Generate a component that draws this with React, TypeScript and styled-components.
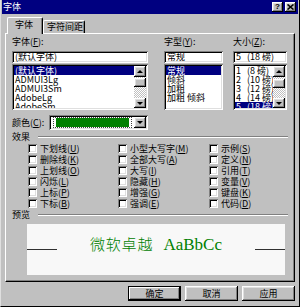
import React from 'react';
import styled, { createGlobalStyle } from 'styled-components';

const GlobalStyle = createGlobalStyle`
  html, body {
    margin: 0;
    padding: 0;
    background: #c0c0c0;
  }
  body {
    font-family: "Noto Sans CJK SC", "Noto Sans", sans-serif;
    font-size: 9px;
    color: #000;
  }
`;

const raised = `
  box-shadow: inset -1px -1px #000, inset 1px 1px #fff, inset -2px -2px #808080, inset 2px 2px #dfdfdf;
`;
const sunken = `
  box-shadow: inset 1px 1px #808080, inset -1px -1px #fff, inset 2px 2px #000, inset -2px -2px #dfdfdf;
`;

const Window = styled.div`
  width: 300px;
  height: 307px;
  box-sizing: border-box;
  background: #c0c0c0;
  border-left: 1px solid #dfdfdf;
  border-right: 1px solid #000;
  border-bottom: 1px solid #000;
  padding: 0 1px 1px 1px;
  display: flex;
  flex-direction: column;
  overflow: hidden;
`;

const TitleBar = styled.div`
  height: 14px;
  background: #000080;
  color: #fff;
  display: flex;
  align-items: center;
  padding: 0 1px 0 1px;
  flex-shrink: 0;
`;

const Title = styled.div`
  flex: 1;
  line-height: 14px;
  font-size: 9px;
`;

const TitleButton = styled.div`
  width: 11px;
  height: 10px;
  background: #c0c0c0;
  ${raised}
  display: flex;
  align-items: center;
  justify-content: center;
  color: #000;
  font-weight: bold;
  font-size: 8px;
  line-height: 10px;
  margin-left: 2px;
  font-family: "Liberation Sans", sans-serif;
`;

const Body = styled.div`
  padding: 3px 3px 0 3px;
  display: flex;
  flex-direction: column;
`;

const TabStrip = styled.div`
  height: 16px;
  display: flex;
  align-items: flex-end;
  padding-left: 2px;
`;

const Tab = styled.div<{ $active?: boolean }>`
  position: relative;
  z-index: ${(p) => (p.$active ? 2 : 1)};
  height: ${(p) => (p.$active ? '17px' : '13px')};
  margin-bottom: ${(p) => (p.$active ? '-1px' : '0')};
  box-sizing: border-box;
  width: ${(p) => (p.$active ? '36px' : '42px')};
  background: #c0c0c0;
  border-top: 1px solid #fff;
  border-left: 1px solid #fff;
  border-right: 1px solid #000;
  border-radius: 2px 2px 0 0;
  box-shadow: inset -1px 0 #808080;
  padding-left: ${(p) => (p.$active ? '7px' : '3px')};
  line-height: ${(p) => (p.$active ? '13px' : '12px')};
`;

const Panel = styled.div`
  height: 249px;
  box-sizing: border-box;
  border-top: 1px solid #fff;
  border-left: 1px solid #fff;
  border-right: 1px solid #000;
  border-bottom: 1px solid #000;
  box-shadow: inset -1px -1px #808080;
  padding: 3px 4px 0 6px;
  display: flex;
  flex-direction: column;
`;

const TopSection = styled.div`
  display: flex;
`;

const Column = styled.div<{ $w: number; $gap?: number }>`
  width: ${(p) => p.$w}px;
  margin-right: ${(p) => p.$gap ?? 0}px;
  display: flex;
  flex-direction: column;
`;

const Label = styled.div`
  height: 10px;
  line-height: 10px;
  margin-bottom: 4px;
  white-space: nowrap;
`;

const Field = styled.div`
  height: 12px;
  line-height: 12px;
  background: #fff;
  ${sunken}
  padding-left: 3px;
  white-space: nowrap;
  overflow: hidden;
`;

const ListBox = styled.div`
  height: 46px;
  box-sizing: border-box;
  margin-top: 1px;
  background: #fff;
  ${sunken}
  padding: 2px;
  display: flex;
`;

const Items = styled.div`
  flex: 1;
  overflow: hidden;
`;

const Item = styled.div<{ $sel?: boolean }>`
  height: 9px;
  line-height: 9px;
  padding-left: 1px;
  white-space: nowrap;
  background: ${(p) => (p.$sel ? '#000080' : 'transparent')};
  color: ${(p) => (p.$sel ? '#fff' : '#000')};
`;

const ScrollBar = styled.div`
  width: 12px;
  display: flex;
  flex-direction: column;
  background: repeating-conic-gradient(#c0c0c0 0 25%, #fff 0 50%) 0 0 / 2px 2px;
`;

const ScrollButton = styled.div<{ $h: number }>`
  height: ${(p) => p.$h}px;
  flex-shrink: 0;
  background: #c0c0c0;
  ${raised}
  display: flex;
  align-items: center;
  justify-content: center;
`;

const Track = styled.div<{ $h?: number }>`
  height: ${(p) => (p.$h ? `${p.$h}px` : 'auto')};
  flex: ${(p) => (p.$h ? '0 0 auto' : '1')};
`;

const Arrow = styled.div<{ $up?: boolean }>`
  width: 0;
  height: 0;
  border-left: 3px solid transparent;
  border-right: 3px solid transparent;
  ${(p) => (p.$up ? 'border-bottom: 3px solid #000;' : 'border-top: 3px solid #000;')}
`;

const ColorRow = styled.div`
  margin-top: 5px;
  height: 15px;
  display: flex;
  align-items: center;
`;

const ColorLabel = styled.div`
  width: 37px;
  white-space: nowrap;
`;

const Combo = styled.div`
  width: 99px;
  height: 15px;
  box-sizing: border-box;
  background: #fff;
  ${sunken}
  padding: 2px;
  display: flex;
`;

const ComboValue = styled.div`
  flex: 1;
  margin: 0 2px;
  border: 1px dotted #404040;
  padding: 0 2px;
  display: flex;
`;

const Swatch = styled.div<{ $c: string }>`
  flex: 1;
  background: ${(p) => p.$c};
`;

const DropButton = styled(ScrollButton)`
  width: 12px;
`;

const GroupHeader = styled.div<{ $mt: number }>`
  margin-top: ${(p) => p.$mt}px;
  height: 10px;
  line-height: 10px;
  display: flex;
  align-items: center;
`;

const GroupLine = styled.div`
  flex: 1;
  margin: 0 2px 0 8px;
  border-top: 1px solid #808080;
  border-bottom: 1px solid #fff;
`;

const CheckGrid = styled.div`
  margin-top: 1px;
  padding-left: 16px;
  display: grid;
  grid-template-columns: 90px 91px 1fr;
  grid-template-rows: repeat(6, 11px);
  grid-auto-flow: column;
`;

const CheckItem = styled.div`
  display: flex;
  align-items: center;
  gap: 3px;
  white-space: nowrap;
  line-height: 11px;
`;

const CheckBox = styled.div`
  width: 9px;
  height: 9px;
  box-sizing: border-box;
  background: #fff;
  ${sunken}
  flex-shrink: 0;
`;

const PreviewBox = styled.div`
  margin: 4px 5px 0 15px;
  height: 51px;
  background: #f8f8f8;
  box-sizing: border-box;
  padding-top: 10px;
`;

const PreviewRow = styled.div`
  display: flex;
  align-items: baseline;
`;

const PreviewLine = styled.div`
  width: 30px;
  height: 1px;
  background: #303030;
`;

const PreviewText = styled.div`
  flex: 1;
  text-align: center;
  color: #008000;
  font-family: "Liberation Serif", "Noto Sans CJK SC", serif;
  font-size: 17px;
  line-height: 20px;
  white-space: nowrap;
`;

const CjkPart = styled.span`
  font-family: "Noto Sans CJK SC", sans-serif;
  font-size: 15px;
  font-weight: 300;
  letter-spacing: 0.8px;
  margin-right: 6px;
`;

const ButtonRow = styled.div`
  margin-top: 4px;
  display: flex;
  justify-content: flex-end;
  gap: 4px;
`;

const Button = styled.div<{ $default?: boolean }>`
  width: 53px;
  height: 15px;
  box-sizing: border-box;
  background: #c0c0c0;
  ${raised}
  ${(p) => (p.$default ? 'outline: 1px solid #000; outline-offset: -1px; box-shadow: inset -2px -2px #000, inset 2px 2px #fff, inset -3px -3px #808080;' : '')}
  text-align: center;
  line-height: 15px;
`;

const fonts = ['(默认字体)', 'ADMUI3Lg', 'ADMUI3Sm', 'AdobeLg', 'AdobeSm'];
const styles = ['常规', '倾斜', '加粗', '加粗 倾斜'];
const sizes = ['1\u00a0\u00a0\u00a0(8 磅)', '2\u00a0\u00a0\u00a0(10 磅)', '3\u00a0\u00a0\u00a0(12 磅)', '4\u00a0\u00a0\u00a0(14 磅)', '5\u00a0\u00a0\u00a0(18 磅)'];

const effects: [string, string][] = [
  ['下划线', 'U'], ['删除线', 'K'], ['上划线', 'O'], ['闪烁', 'L'], ['上标', 'P'], ['下标', 'B'],
  ['小型大写字', 'M'], ['全部大写', 'A'], ['大写', 'I'], ['隐藏', 'H'], ['增强', 'G'], ['强调', 'E'],
  ['示例', 'S'], ['定义', 'N'], ['引用', 'T'], ['变量', 'V'], ['键盘', 'K'], ['代码', 'D'],
];

const Mn = ({ text, k }: { text: string; k: string }) => (
  <>
    {text}(<u>{k}</u>)
  </>
);

const Scroll = ({ top }: { top: number }) => (
  <ScrollBar>
    <ScrollButton $h={11}><Arrow $up /></ScrollButton>
    <Track $h={top} />
    <ScrollButton $h={9} />
    <Track />
    <ScrollButton $h={10}><Arrow /></ScrollButton>
  </ScrollBar>
);

export default function App() {
  return (
    <>
      <GlobalStyle />
      <Window>
        <TitleBar>
          <Title>字体</Title>
          <TitleButton>?</TitleButton>
          <TitleButton style={{ marginRight: 1 }}>
            <svg width="7" height="6" viewBox="0 0 7 6">
              <path d="M0.5 0.5 L6.5 5.5 M6.5 0.5 L0.5 5.5" stroke="#000" strokeWidth="1.6" />
            </svg>
          </TitleButton>
        </TitleBar>
        <Body>
          <TabStrip>
            <Tab $active>字体</Tab>
            <Tab>字符间距</Tab>
          </TabStrip>
          <Panel>
            <TopSection>
              <Column $w={136} $gap={16}>
                <Label><Mn text="字体" k="F" />:</Label>
                <Field>(默认字体)</Field>
                <ListBox>
                  <Items>
                    {fonts.map((f, i) => (
                      <Item key={f} $sel={i === 0}>{f}</Item>
                    ))}
                  </Items>
                  <Scroll top={1} />
                </ListBox>
              </Column>
              <Column $w={59} $gap={10}>
                <Label><Mn text="字型" k="Y" />:</Label>
                <Field>常规</Field>
                <ListBox>
                  <Items>
                    {styles.map((s, i) => (
                      <Item key={s} $sel={i === 0}>{s}</Item>
                    ))}
                  </Items>
                </ListBox>
              </Column>
              <Column $w={54}>
                <Label><Mn text="大小" k="Z" />:</Label>
                <Field>5&nbsp;&nbsp;&nbsp;(18 磅)</Field>
                <ListBox>
                  <Items>
                    {sizes.map((s, i) => (
                      <Item key={s} $sel={i === 4}>{s}</Item>
                    ))}
                  </Items>
                  <Scroll top={2} />
                </ListBox>
              </Column>
            </TopSection>
            <ColorRow>
              <ColorLabel><Mn text="颜色" k="C" />:</ColorLabel>
              <Combo>
                <ComboValue>
                  <Swatch $c="#008000" />
                </ComboValue>
                <DropButton $h={11}><Arrow /></DropButton>
              </Combo>
            </ColorRow>
            <GroupHeader $mt={2}>
              效果
              <GroupLine />
            </GroupHeader>
            <CheckGrid>
              {effects.map(([t, k], i) => (
                <CheckItem key={i}>
                  <CheckBox />
                  <span><Mn text={t} k={k} /></span>
                </CheckItem>
              ))}
            </CheckGrid>
            <GroupHeader $mt={1}>
              预览
              <GroupLine />
            </GroupHeader>
            <PreviewBox>
              <PreviewRow>
                <PreviewLine />
                <PreviewText>
                  <CjkPart>微软卓越</CjkPart> AaBbCc
                </PreviewText>
                <PreviewLine />
              </PreviewRow>
            </PreviewBox>
          </Panel>
          <ButtonRow>
            <Button $default>确定</Button>
            <Button>取消</Button>
            <Button>应用</Button>
          </ButtonRow>
        </Body>
      </Window>
    </>
  );
}
